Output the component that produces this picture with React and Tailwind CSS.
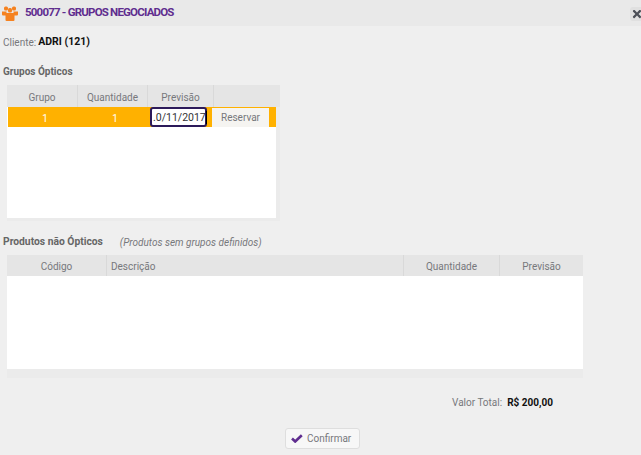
import React from "react";
import { FaTimes } from "react-icons/fa";

const HeadCell = ({ className = "", children }) => (
  <div className={`flex items-center justify-center pt-[2px] border-r border-[#d9d9d9] ${className}`}>{children}</div>
);

const GroupIcon = () => (
  <svg viewBox="0 0 16 15" className="w-[16px] h-[15px] text-[#f58220]" fill="currentColor">
    <rect x="2" y="0.5" width="4" height="4" rx="1.5" />
    <rect x="10" y="0.5" width="4" height="4" rx="1.5" />
    <rect x="6" y="2" width="4" height="4.5" rx="1.5" />
    <path d="M0 5.5h4.5v4H1a1 1 0 0 1-1-1zM11.5 5.5H16v3a1 1 0 0 1-1 1h-3.5z" />
    <path d="M4.5 7h7a1 1 0 0 1 1 1v6a1 1 0 0 1-1 1h-7a1 1 0 0 1-1-1V8a1 1 0 0 1 1-1z" />
  </svg>
);

export default function App() {
  return (
    <div className="w-[641px] h-[455px] overflow-hidden bg-[#efefef] text-[10px] text-[#77787c] font-['Roboto',sans-serif]">
      {/* title bar */}
      <div className="h-[26px] bg-[#e9e9e9] flex items-center pl-[2px] relative">
        <GroupIcon />
        <span className="ml-[7px] text-[11.5px] font-bold text-[#5f2d8f] tracking-[-0.8px]">500077 - GRUPOS NEGOCIADOS</span>
        <div className="absolute left-[630px] top-[7px] w-[14px] h-[14px] rounded-[3px] bg-[#e0e0e0] flex items-center pl-[1px]">
          <FaTimes className="w-[12px] h-[12px] text-[#4c4f57]" />
        </div>
      </div>

      <div className="pl-[3px] pt-[9px] h-[14px] box-content flex items-center">
        <span>Cliente:</span>
        <span className="ml-[2px] text-[#111] font-bold text-[10.5px]">ADRI (121)</span>
      </div>

      <div className="pl-[3px] mt-[15px] h-[14px] flex items-center font-bold text-[#666]">Grupos Ópticos</div>

      {/* grupos opticos */}
      <div className="ml-[7px] mt-[7px] w-[273px] h-[136px] bg-[#ebebeb]">
        <div className="h-[22px] bg-[#e5e5e5] flex">
          <HeadCell className="w-[71px]">Grupo</HeadCell>
          <HeadCell className="w-[70px]">Quantidade</HeadCell>
          <HeadCell className="w-[66px]">Previsão</HeadCell>
        </div>
        <div className="w-[269px] h-[111px] bg-white">
          <div className="h-[20px] ml-px bg-[#ffb100] flex items-center text-white">
            <div className="w-[72px] pl-[2px] pt-[2px] text-center">1</div>
            <div className="w-[70px] pt-[2px] text-center">1</div>
            <div className="w-[57px] h-[20px] border-2 border-[#2c1a5a] rounded-[3px] bg-white text-[#333] text-[10.5px] whitespace-nowrap flex items-center pl-[1px] pt-[1px]">
              <span>.0/11/2017</span>
              <span className="w-px h-[13px] bg-black shrink-0" />
            </div>
            <div className="w-[57px] h-[19px] mt-px ml-[5px] bg-[#f5f4f1] text-[#77787c] flex items-center justify-center">Reservar</div>
          </div>
        </div>
      </div>

      <div className="pl-[3px] mt-[14px] h-[14px] flex items-center">
        <span className="font-bold text-[#666] text-[10.3px]">Produtos não Ópticos</span>
        <span className="ml-[17px] italic">(Produtos sem grupos definidos)</span>
      </div>

      {/* produtos nao opticos */}
      <div className="ml-[7px] mt-[6px] w-[576px] h-[123px] bg-[#ebebeb]">
        <div className="h-[21px] bg-[#e5e5e5] flex">
          <HeadCell className="w-[100px]">Código</HeadCell>
          <HeadCell className="w-[297px] !justify-start pl-[4px]">Descrição</HeadCell>
          <HeadCell className="w-[96px]">Quantidade</HeadCell>
          <div className="flex-1 flex items-center justify-center pt-[2px]">Previsão</div>
        </div>
        <div className="h-[93px] bg-white" />
      </div>

      <div className="mt-[17px] h-[14px] flex items-center pl-[452px]">
        <span>Valor Total:</span>
        <span className="ml-[5px] text-[#111] font-bold">R$ 200,00</span>
      </div>

      <div className="mt-[19px] flex pl-[285px]">
        <button className="w-[75px] h-[21px] bg-[#f7f7f7] border border-[#dedede] rounded-[3px] flex items-center pl-[5px]">
          <svg viewBox="0 0 12 9" className="w-[12px] h-[9px] text-[#5f2d8f]" fill="none" stroke="currentColor" strokeWidth="2.6">
            <path d="M1 4.5l3.2 3 6.6-6.3" />
          </svg>
          <span className="ml-[4px]">Confirmar</span>
        </button>
      </div>
    </div>
  );
}
